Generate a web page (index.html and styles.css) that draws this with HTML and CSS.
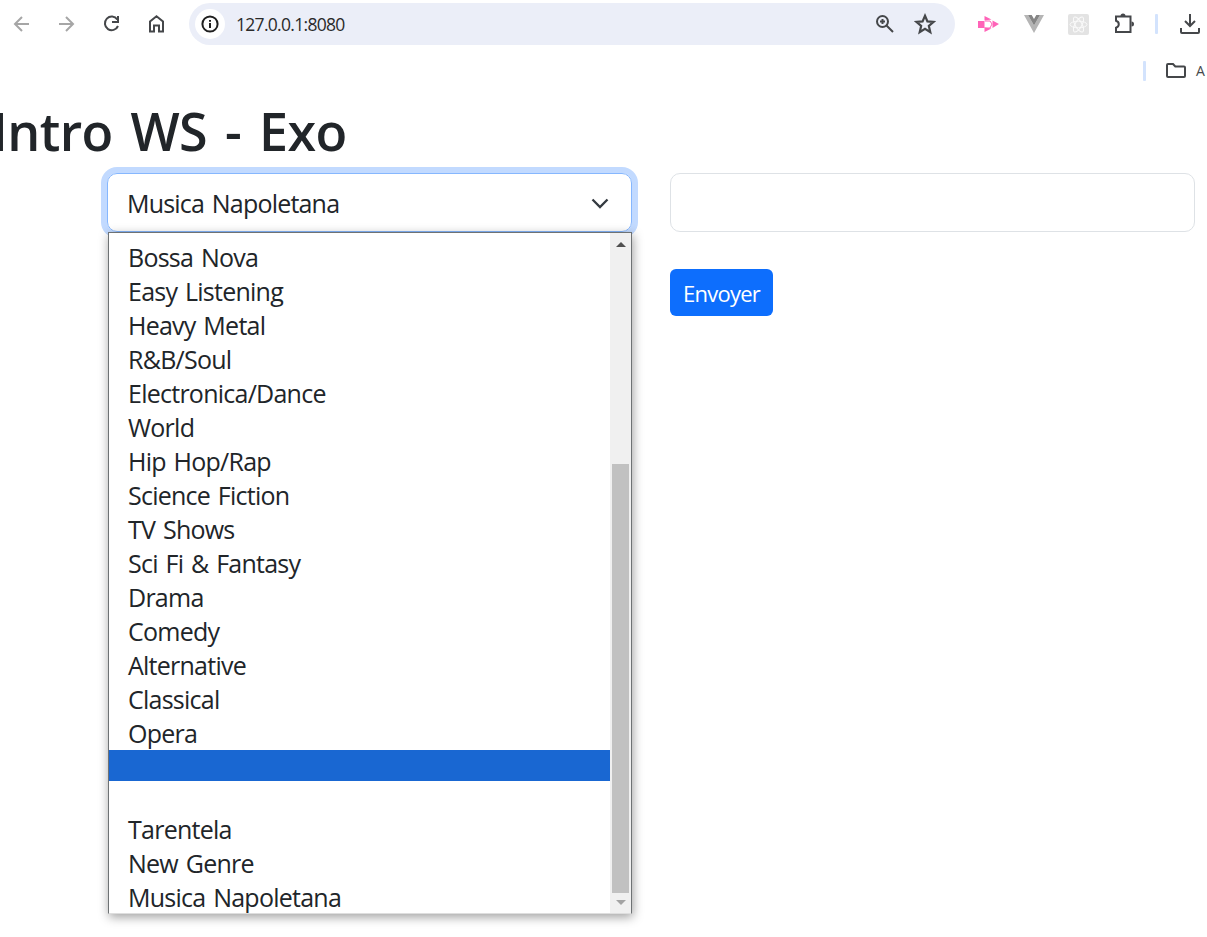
FILE: index.html
```html
<!DOCTYPE html>
<html lang="fr">
<head>
<meta charset="utf-8">
<title>Intro WS - Exo</title>
<link rel="stylesheet" href="styles.css">
</head>
<body>
<header class="toolbar">
  <nav class="nav">
    <svg class="icon faded" viewBox="0 0 24 24"><path d="M19 12H5M12 5l-7 7 7 7"/></svg>
    <svg class="icon faded" viewBox="0 0 24 24"><path d="M4 12h14M11 5l7 7-7 7"/></svg>
    <svg class="icon" viewBox="0 0 24 24"><path d="M17.300 7.500A6.800 6.800 0 1 0 18 14M18 4v6h-6"/></svg>
    <svg class="icon" viewBox="0 0 24 24"><path d="M5 19.500V9.500L11.500 4.300 18 9.500v10h-4v-6H9v6z"/></svg>
  </nav>
  <div class="address">
    <span class="site"><svg class="icon-info" viewBox="0 0 18 18"><circle cx="9" cy="9" r="7.600"/><path d="M9 8v5M9 5v1.800"/></svg></span>
    <span class="url">127.0.0.1:8080</span>
    <svg class="zoom" viewBox="0 0 20 20"><circle cx="7.500" cy="7.500" r="5.500"/><path d="m11.500 11.500 6.500 6.500M5 7.500h5M7.500 5v5"/></svg>
    <svg class="star" viewBox="0 0 20 20"><path d="m10 2.500 2.200 5.100 5.500.500-4.200 3.700 1.300 5.600L10 14.400l-4.800 3 1.300-5.600L2.300 8.100l5.500-.5z"/></svg>
  </div>
  <div class="extensions">
    <svg class="ext-play" viewBox="0 0 22 18"><path class="pink" d="M0 6h6.500v7H0zM6.500 1l7 3.500-7 1zM6.500 17l7-3.500-7-1zM14.500 5.500 21 9l-6.500 4z"/><path class="pink-line" d="M7 6h5l2 3-2 4H7"/></svg>
    <svg class="ext-vue" viewBox="0 0 20 18"><path fill="#b5b5b5" d="M0 0h4l6 10.500L16 0h4L10 18z"/><path fill="#858585" d="M4 0h3.700L10 4l2.300-4H16l-6 10.500z"/></svg>
    <svg class="ext-react" viewBox="0 0 21 21"><rect width="21" height="21" rx="2" fill="#e3e3e3"/><g fill="none" stroke="#fafafa"><ellipse cx="10.500" cy="10.500" rx="8.500" ry="3.300"/><ellipse cx="10.500" cy="10.500" rx="8.500" ry="3.300" transform="rotate(60 10.500 10.500)"/><ellipse cx="10.500" cy="10.500" rx="8.500" ry="3.300" transform="rotate(120 10.500 10.500)"/></g></svg>
    <svg class="ext-puzzle" viewBox="0 0 22 22"><path class="line" d="M3 3.500h14.500v15.500H3v-4.300c3.700-1 3.700-5.900 0-6.900z"/><path class="solid" d="M7.500 3a2.500 2.500 0 0 1 5 0zM18.500 8.500a2.500 2.500 0 0 1 0 5z"/></svg>
    <span class="divider"></span>
    <svg class="download" viewBox="0 0 22 22"><path d="M11 1v12M6 8l5 5 5-5M2 15v4q0 1 1 1h16q1 0 1-1v-4"/></svg>
  </div>
</header>
<div class="bookmarks">
  <span class="divider"></span>
  <svg class="folder" viewBox="0 0 22 18"><path d="M3 2h5l2.300 2.500H19q1 0 1 1V14q0 1-1 1H3q-1 0-1-1V3q0-1 1-1z"/></svg>
  <span class="bookmark">A</span>
</div>
<main class="page">
  <h1 class="title">Intro WS - Exo</h1>
  <form class="form">
    <div class="genre">
      <div class="select"><span>Musica Napoletana</span>
        <svg class="chevron" viewBox="0 0 18 11"><path d="m1.500 1.500 7.500 7.500 7.500-7.500"/></svg>
      </div>
      <div class="menu">
        <ul class="options">
          <li>Bossa Nova</li><li>Easy Listening</li><li>Heavy Metal</li><li>R&amp;B/Soul</li><li>Electronica/Dance</li><li>World</li><li>Hip Hop/Rap</li><li>Science Fiction</li><li>TV Shows</li><li>Sci Fi &amp; Fantasy</li><li>Drama</li><li>Comedy</li><li>Alternative</li><li>Classical</li><li>Opera</li><li class="blank active"></li><li class="blank"></li><li>Tarentela</li><li>New Genre</li><li>Musica Napoletana</li>
        </ul>
        <div class="scrollbar"><span class="up"></span><span class="thumb"></span><span class="down"></span></div>
      </div>
    </div>
    <div class="entry">
      <input class="field" type="text" aria-label="Genre">
      <button class="send" type="button">Envoyer</button>
    </div>
  </form>
</main>
</body>
</html>
```
FILE: styles.css
```css
* { box-sizing: border-box; }
body { margin: 0; height: 937px; overflow: hidden; background: #fff; color: #212529; font-family: "Open Sans", "Noto Sans", sans-serif; }
svg { display: block; flex: none; fill: none; stroke: #45474a; stroke-width: 2; }
.toolbar { display: flex; align-items: center; height: 48px; padding-left: 10px; }
.nav { display: flex; gap: 21px; width: 179px; }
.icon { width: 24px; height: 24px; }
.faded { stroke: #a6a6a6; }
.address { display: flex; align-items: center; width: 766px; height: 42px; padding: 0 19px 0 6px; border-radius: 21px; background: #ebeef8; }
.site { display: flex; align-items: center; justify-content: center; width: 30px; height: 30px; border-radius: 50%; background: #fff; }
.icon-info { width: 18px; height: 18px; stroke: #1f1f1f; }
.url { flex: 1; margin: -1px 0 0 11px; color: #2a2a2a; font-size: 17.5px; letter-spacing: -.7px; }
.zoom { width: 20px; height: 20px; }
.star { width: 22px; height: 22px; margin-left: 19px; }
.extensions { display: flex; align-items: center; margin-left: 23px; }
.ext-play { width: 22px; height: 18px; stroke: none; }
.pink { fill: #ff63b8; }
.pink-line { stroke: #ff63b8; stroke-width: 1; }
.ext-vue { width: 20px; height: 18px; margin-left: 24px; stroke: none; }
.ext-react { width: 21px; height: 21px; margin-left: 24px; stroke: none; stroke-width: 1; }
.ext-puzzle { width: 22px; height: 22px; margin-left: 24px; }
.solid { fill: #45474a; stroke: none; }
.divider { width: 3px; height: 20px; border-radius: 1px; background: #d3e3fd; }
.extensions .divider { margin-left: 20px; }
.download { width: 22px; height: 22px; margin-left: 21px; }
.bookmarks { display: flex; align-items: center; height: 45px; padding-left: 1143px; }
.folder { width: 22px; height: 18px; margin-left: 19px; }
.bookmark { margin-left: 9px; font-size: 14px; color: #45474a; }
.page { padding-top: 7px; }
.title { margin: 0 0 0 -8px; height: 73px; font-size: 52px; line-height: 61px; font-weight: 600; letter-spacing: -.6px; word-spacing: 5px; }
.form { display: flex; gap: 38px; padding-left: 107px; }
.genre { position: relative; width: 525px; height: 59px; }
.select { display: flex; align-items: center; justify-content: space-between; height: 59px; padding: 1px 22px 0 19px; border: 1px solid #86b7fe; border-radius: 10px; box-shadow: 0 0 0 6px #c2daff; font-size: 25px; letter-spacing: -.8px; word-spacing: 2px; }
.chevron { width: 18px; height: 11px; stroke: #343a40; stroke-width: 2.3; }
.menu { position: absolute; top: 59px; left: 1px; display: flex; width: 524px; height: 682px; border: 1px solid #6e7274; border-bottom-color: #dedede; background: #fff; box-shadow: 1px 3px 10px rgba(0,0,0,.38); }
.options { flex: 1; margin: 0; padding: 7px 0 0; list-style: none; font-size: 25px; letter-spacing: -.75px; word-spacing: 2px; }
.options li { height: 34px; padding-left: 19px; line-height: 34px; white-space: nowrap; }
.options .blank { height: 31px; }
.options .active { background: #1967d2; }
.scrollbar { display: flex; flex-direction: column; align-items: center; width: 21px; background: #f0f0f0; }
.up { margin-top: 9px; border: 5px solid transparent; border-top: 0; border-bottom-color: #505050; }
.thumb { width: 17px; height: 429px; margin-top: 217px; background: #c1c1c1; }
.down { margin-top: 7px; border: 5px solid transparent; border-bottom: 0; border-top-color: #a3a3a3; }
.entry { display: flex; flex-direction: column; align-items: flex-start; gap: 37px; }
.field { width: 525px; height: 59px; border: 1px solid #dee2e6; border-radius: 10px; background: #fff; }
.send { width: 103px; height: 47px; padding: 0; border: 0; border-radius: 6px; background: #0d6efd; color: #fff; font: 22px "Open Sans", sans-serif; letter-spacing: -.75px; }
```
